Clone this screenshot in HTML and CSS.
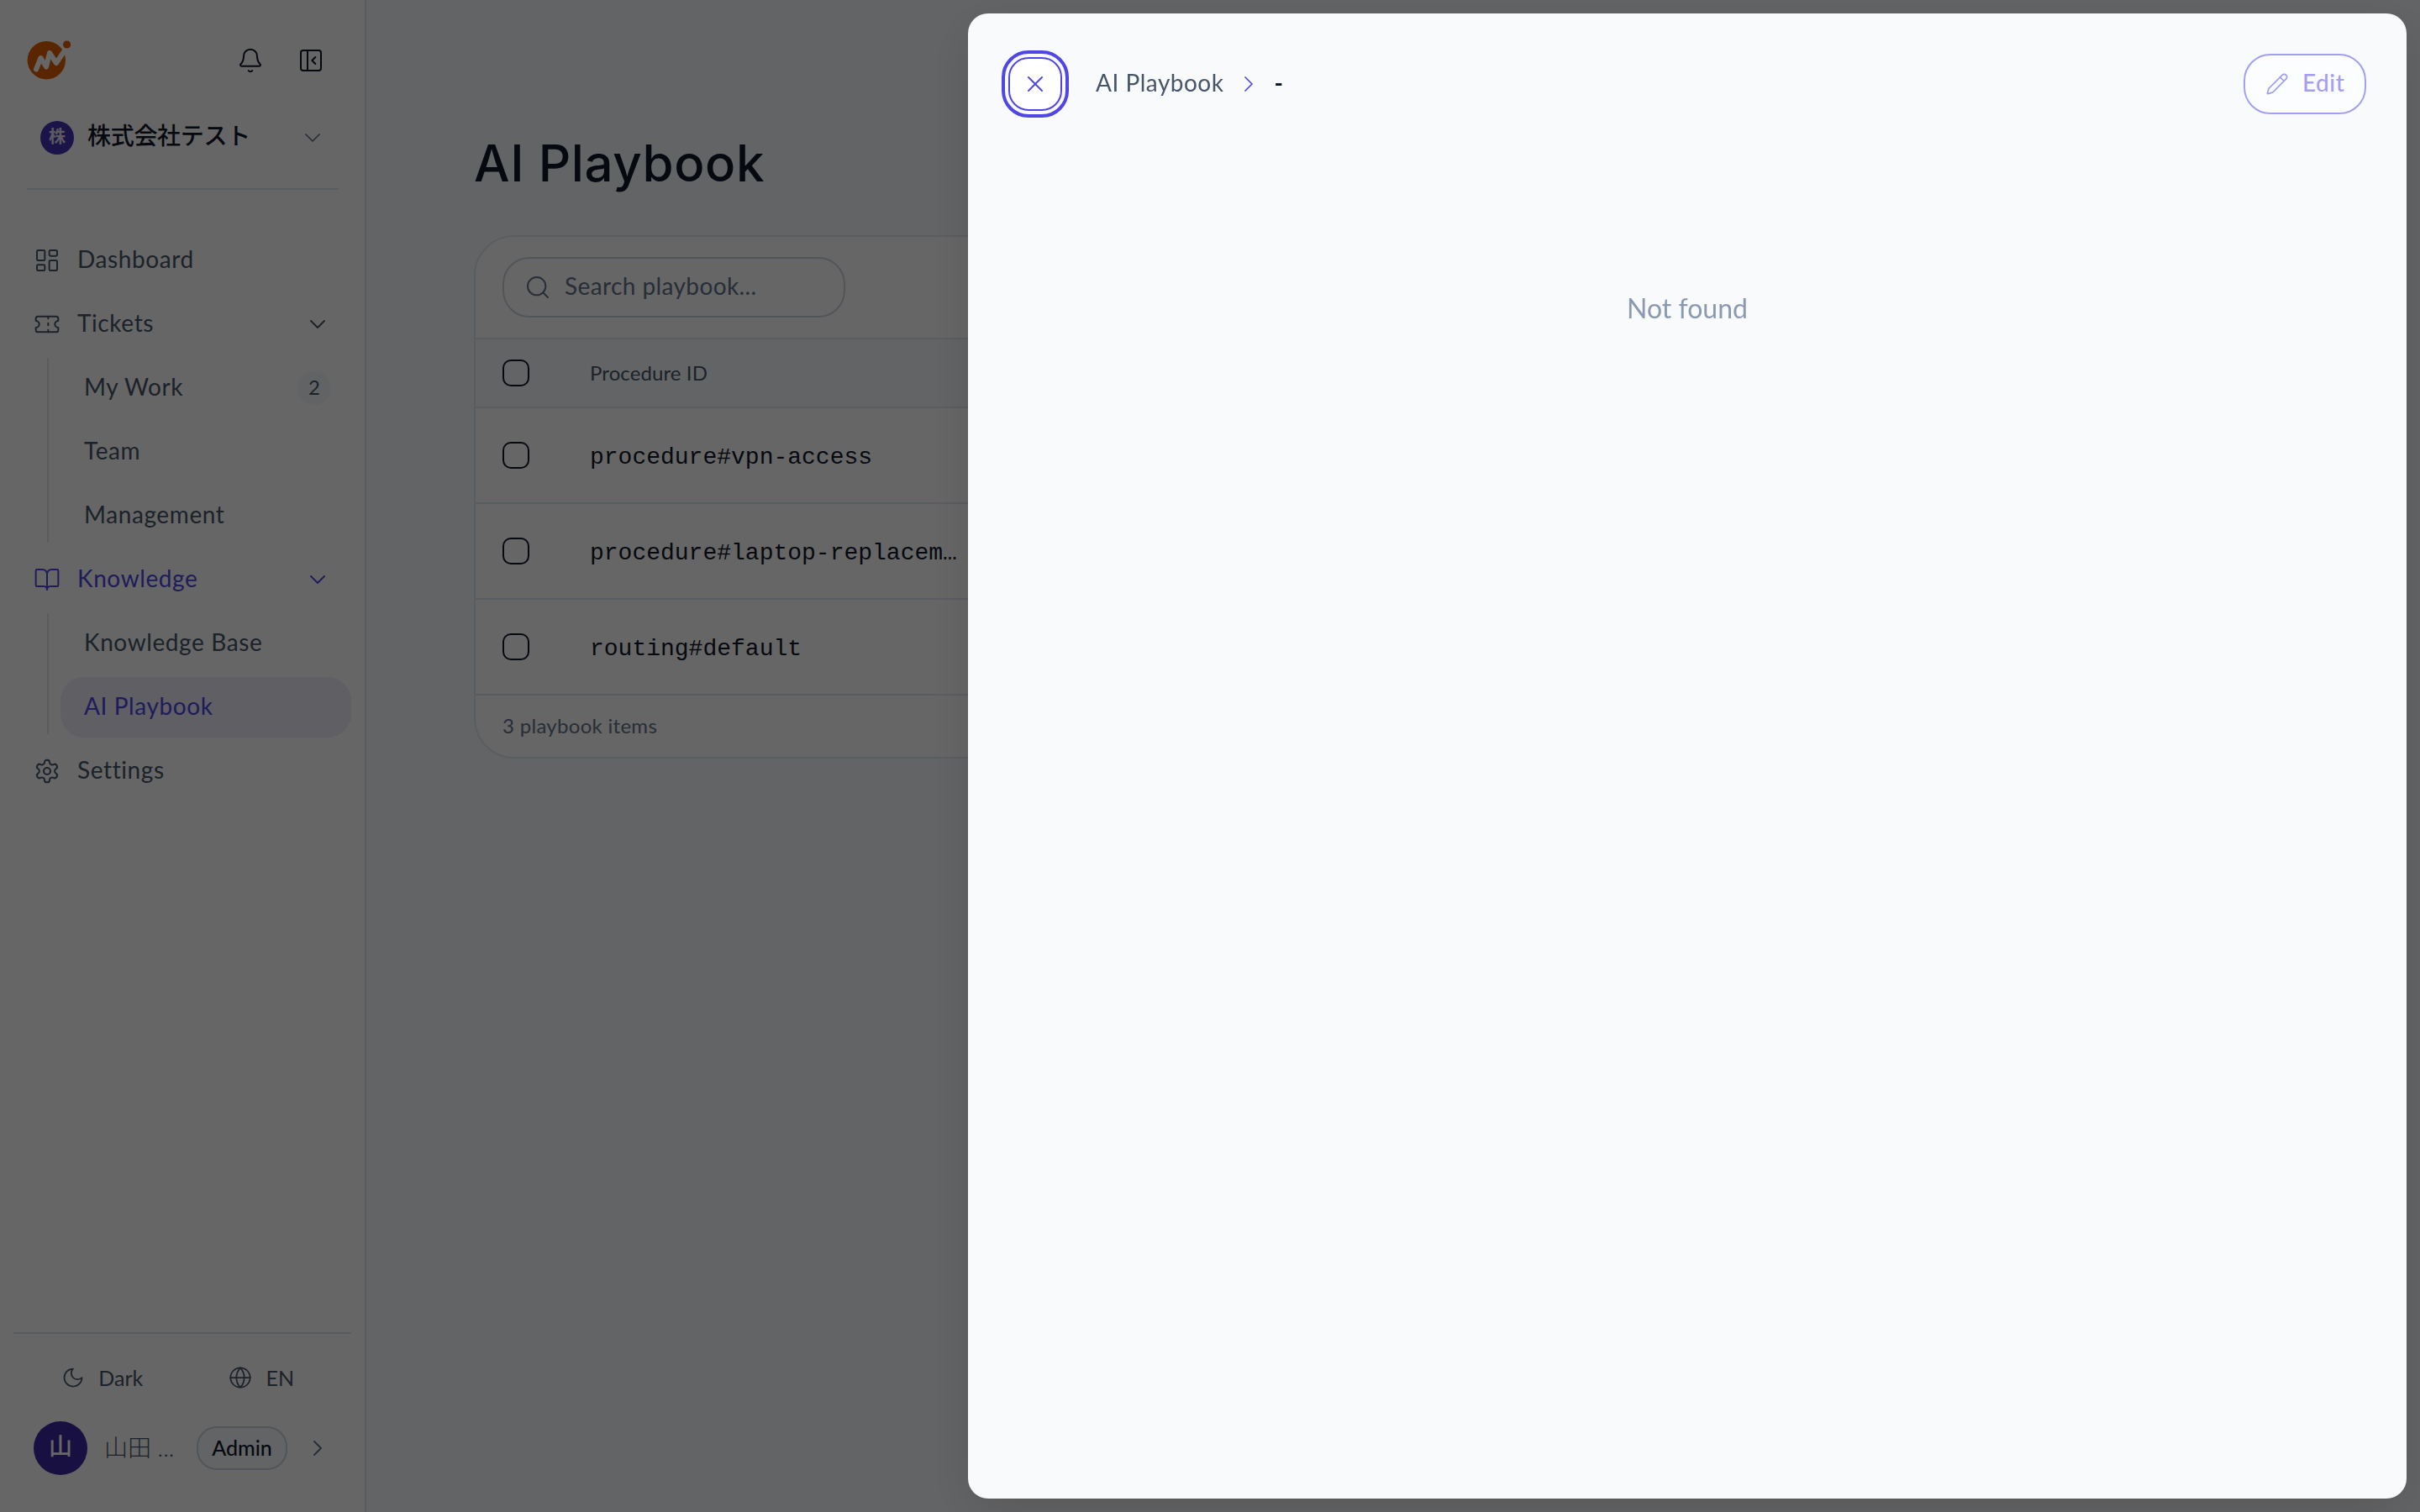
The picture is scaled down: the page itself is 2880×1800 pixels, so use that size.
FILE: index.html
```html
<!DOCTYPE html>
<html lang="en">
<head>
    <meta charset="UTF-8">
    <meta name="viewport" content="width=device-width, initial-scale=1.0">
    <title>AI Playbook</title>
    <link rel="stylesheet" href="styles.css">
</head>
<body>
    <div class="app">
        <!-- Sidebar -->
        <aside class="sidebar">
            <div class="sidebar-top">
                <svg class="logo" viewBox="0 0 52 48">
                    <circle cx="23.300" cy="23.700" r="22.700" fill="#e06000"/>
                    <circle cx="47.600" cy="5" r="4.600" fill="#e06000"/>
                    <path d="M11 34.500 L16.500 21 L23 31.500 L27 15 L35 27 L44 13.500" fill="none" stroke="#fff" stroke-width="6" stroke-linecap="round" stroke-linejoin="round"/>
                </svg>
                <div class="top-actions">
                    <svg class="icon" viewBox="0 0 24 24"><path d="M10.268 21a2 2 0 0 0 3.464 0"/><path d="M3.262 15.326A1 1 0 0 0 4 17h16a1 1 0 0 0 .74-1.673C19.41 13.956 18 12.499 18 8A6 6 0 0 0 6 8c0 4.499-1.411 5.956-2.738 7.326"/></svg>
                    <svg class="icon" viewBox="0 0 24 24"><rect x="3" y="3" width="18" height="18" rx="2"/><path d="M9 3v18"/><path d="m16 15-3-3 3-3"/></svg>
                </div>
            </div>
            <div class="org">
                <span class="org-avatar">株</span>
                <span class="org-name">株式会社テスト</span>
                <svg class="icon org-chevron" viewBox="0 0 24 24"><path d="m6 9 6 6 6-6"/></svg>
            </div>

            <nav class="nav">
                <a class="nav-item">
                    <svg class="icon" viewBox="0 0 24 24"><rect x="3" y="3" width="7" height="9" rx="1"/><rect x="14" y="3" width="7" height="5" rx="1"/><rect x="14" y="12" width="7" height="9" rx="1"/><rect x="3" y="16" width="7" height="5" rx="1"/></svg>
                    <span class="label">Dashboard</span>
                </a>
                <a class="nav-item">
                    <svg class="icon" viewBox="0 0 24 24"><path d="M2 9a3 3 0 0 1 0 6v2a2 2 0 0 0 2 2h16a2 2 0 0 0 2-2v-2a3 3 0 0 1 0-6V7a2 2 0 0 0-2-2H4a2 2 0 0 0-2 2Z"/><path d="M13 5v2"/><path d="M13 17v2"/><path d="M13 11v2"/></svg>
                    <span class="label">Tickets</span>
                    <svg class="icon chevron" viewBox="0 0 24 24"><path d="m6 9 6 6 6-6"/></svg>
                </a>
                <div class="subnav">
                    <a class="nav-item"><span class="label">My Work</span><span class="count">2</span></a>
                    <a class="nav-item"><span class="label">Team</span></a>
                    <a class="nav-item"><span class="label">Management</span></a>
                </div>
                <a class="nav-item current">
                    <svg class="icon" viewBox="0 0 24 24"><path d="M12 7v14"/><path d="M3 18a1 1 0 0 1-1-1V4a1 1 0 0 1 1-1h5a4 4 0 0 1 4 4 4 4 0 0 1 4-4h5a1 1 0 0 1 1 1v13a1 1 0 0 1-1 1h-6a3 3 0 0 0-3 3 3 3 0 0 0-3-3z"/></svg>
                    <span class="label">Knowledge</span>
                    <svg class="icon chevron" viewBox="0 0 24 24"><path d="m6 9 6 6 6-6"/></svg>
                </a>
                <div class="subnav">
                    <a class="nav-item"><span class="label">Knowledge Base</span></a>
                    <a class="nav-item current active"><span class="label">AI Playbook</span></a>
                </div>
                <a class="nav-item">
                    <svg class="icon" viewBox="0 0 24 24"><path d="M12.220 2h-.44a2 2 0 0 0-2 2v.18a2 2 0 0 1-1 1.730l-.43.25a2 2 0 0 1-2 0l-.15-.08a2 2 0 0 0-2.730.730l-.22.38a2 2 0 0 0 .73 2.730l.15.100a2 2 0 0 1 1 1.720v.51a2 2 0 0 1-1 1.740l-.15.090a2 2 0 0 0-.73 2.730l.22.380a2 2 0 0 0 2.730.730l.15-.08a2 2 0 0 1 2 0l.43.250a2 2 0 0 1 1 1.730V20a2 2 0 0 0 2 2h.44a2 2 0 0 0 2-2v-.18a2 2 0 0 1 1-1.730l.43-.25a2 2 0 0 1 2 0l.15.080a2 2 0 0 0 2.730-.73l.22-.39a2 2 0 0 0-.73-2.730l-.15-.08a2 2 0 0 1-1-1.740v-.5a2 2 0 0 1 1-1.740l.15-.09a2 2 0 0 0 .73-2.730l-.22-.38a2 2 0 0 0-2.730-.73l-.15.080a2 2 0 0 1-2 0l-.43-.25a2 2 0 0 1-1-1.730V4a2 2 0 0 0-2-2z"/><circle cx="12" cy="12" r="3"/></svg>
                    <span class="label">Settings</span>
                </a>
            </nav>

            <div class="sidebar-bottom">
                <div class="prefs">
                    <span class="pref"><svg class="icon" viewBox="0 0 24 24"><path d="M12 3a6 6 0 0 0 9 9 9 9 0 1 1-9-9Z"/></svg>Dark</span>
                    <span class="pref"><svg class="icon" viewBox="0 0 24 24"><circle cx="12" cy="12" r="10"/><path d="M12 2a14.500 14.500 0 0 0 0 20 14.500 14.500 0 0 0 0-20"/><path d="M2 12h20"/></svg>EN</span>
                </div>
                <div class="user">
                    <span class="user-avatar">山</span>
                    <span class="user-name">山田 ...</span>
                    <span class="role">Admin</span>
                    <svg class="icon user-chevron" viewBox="0 0 24 24"><path d="m9 18 6-6-6-6"/></svg>
                </div>
            </div>
        </aside>

        <!-- Playbook list -->
        <main class="main">
            <h1>AI Playbook</h1>
            <section class="card">
                <div class="toolbar">
                    <div class="search">
                        <svg class="icon" viewBox="0 0 24 24"><circle cx="11" cy="11" r="8"/><path d="m21 21-4.300-4.300"/></svg>
                        <span class="label">Search playbook...</span>
                    </div>
                </div>
                <div class="row head"><span class="checkbox"></span><span class="col-id">Procedure ID</span></div>
                <div class="row"><span class="checkbox"></span><span class="mono">procedure#vpn-access</span></div>
                <div class="row"><span class="checkbox"></span><span class="mono">procedure#laptop-replacem…</span></div>
                <div class="row"><span class="checkbox"></span><span class="mono">routing#default</span></div>
                <div class="card-footer">3 playbook items</div>
            </section>
        </main>
    </div>

    <div class="overlay"></div>

    <!-- Detail drawer -->
    <div class="drawer">
        <header class="drawer-header">
            <button class="close-btn"><svg class="icon" viewBox="0 0 24 24"><path d="M18 6 6 18"/><path d="m6 6 12 12"/></svg></button>
            <div class="breadcrumb">
                <span class="label">AI Playbook</span>
                <svg class="icon" viewBox="0 0 24 24"><path d="m9 18 6-6-6-6"/></svg>
                <strong class="label">-</strong>
            </div>
            <button class="edit-btn" disabled>
                <svg class="icon" viewBox="0 0 24 24"><path d="M21.174 6.812a1 1 0 0 0-3.986-3.987L3.842 16.174a2 2 0 0 0-.5.830l-1.321 4.352a.5.500 0 0 0 .623.622l4.353-1.320a2 2 0 0 0 .83-.497z"/><path d="m15 5 4 4"/></svg>
                <span class="label">Edit</span>
            </button>
        </header>
        <p class="empty">Not found</p>
    </div>
</body>
</html>
```
FILE: styles.css
```css
* {
    box-sizing: border-box;
}

body {
    margin: 0;
    font-family: Lato, "Noto Sans CJK JP", sans-serif;
    font-size: 28px;
    line-height: 40px;
    color: #0f172a;
    background-color: #f8fafc;
    overflow: hidden;
}

.icon {
    width: 32px;
    height: 32px;
    flex: none;
    fill: none;
    stroke: currentColor;
    stroke-width: 1.5;
    stroke-linecap: round;
    stroke-linejoin: round;
}

/* Optical centering next to icons */
.label {
    padding-bottom: 4px;
    letter-spacing: 0.5px;
}

.app {
    display: flex;
    height: 1800px;
}

/* Sidebar */
.sidebar {
    width: 436px;
    flex: none;
    display: flex;
    flex-direction: column;
    background-color: #fff;
    border-right: 2px solid #e2e8f0;
}

.sidebar-top {
    display: flex;
    justify-content: space-between;
    align-items: center;
    height: 48px;
    margin: 48px 48px 0 32px;
}

.logo {
    width: 52px;
    height: 48px;
}

.top-actions {
    display: flex;
    gap: 40px;
}

.org {
    display: flex;
    align-items: center;
    height: 130px;
    margin: 0 31px 0 32px;
    padding: 8px 15px 0 16px;
    border-bottom: 2px solid #e2e8f0;
}

.org-avatar {
    width: 40px;
    height: 40px;
    border-radius: 50%;
    background-color: #4434b4;
    color: #e4e2f0;
    font-size: 20px;
    font-weight: 700;
    line-height: 37px;
    text-align: center;
}

.org-name {
    margin: -6px auto 0 16px;
    font-weight: 500;
    letter-spacing: -0.3px;
}

.org-chevron {
    color: #64748b;
    stroke-width: 1.3;
}

.nav {
    display: flex;
    flex-direction: column;
    gap: 4px;
    margin: 48px 16px 0;
    color: #475569;
}

.nav-item {
    display: flex;
    align-items: center;
    gap: 20px;
    height: 72px;
    padding: 0 24px;
    border-radius: 28px;
}

.nav-item .label {
    letter-spacing: 0.6px;
}

.nav-item .chevron {
    margin-left: auto;
}

.subnav {
    display: flex;
    flex-direction: column;
    gap: 4px;
    margin: 0 0 4px 40px;
    padding-left: 14px;
    border-left: 2px solid #e2e8f0;
}

.subnav .nav-item {
    padding: 0 24px 0 28px;
}

.subnav .nav-item:last-child {
    margin-bottom: -4px;
}

.count {
    width: 40px;
    height: 40px;
    margin-left: auto;
    border-radius: 50%;
    background-color: #f5f8fb;
    font-size: 24px;
    line-height: 38px;
    text-align: center;
}

.nav-item.current {
    color: #4f46e5;
}

.nav-item.active {
    background-color: #ededf9;
}

.sidebar-bottom {
    margin: auto 16px 44px;
    border-top: 2px solid #e2e8f0;
    color: #475569;
}

.prefs {
    display: flex;
    height: 104px;
    align-items: center;
    padding: 0 6px 0 5px;
    font-size: 25px;
}

.pref {
    display: flex;
    flex: 1;
    justify-content: center;
    align-items: center;
    gap: 16px;
}

.pref:last-child {
    margin-left: -12px;
}

.pref .icon {
    width: 28px;
    height: 28px;
}

.user {
    display: flex;
    align-items: center;
    height: 64px;
    padding: 0 24px;
}

.user-avatar {
    width: 64px;
    height: 64px;
    border-radius: 50%;
    background-color: #3c2aa4;
    color: #fff;
    font-weight: 500;
    line-height: 58px;
    text-align: center;
}

.user-name {
    margin-left: 20px;
    width: 110px;
    padding-bottom: 2px;
    font-weight: 300;
}

.role {
    width: 108px;
    height: 52px;
    border: 2px solid #cbd5e1;
    border-radius: 24px;
    background-color: #f8fafc;
    color: #0f172a;
    font-size: 25px;
    font-weight: 500;
    line-height: 46px;
    text-align: center;
}

.user-chevron {
    margin-left: 20px;
    color: #64748b;
}

/* List */
.main {
    flex: 1;
    padding: 154px 128px 0;
}

h1 {
    margin: 0 0 46px;
    font-family: Inter, sans-serif;
    font-size: 60px;
    font-weight: 500;
    line-height: 80px;
    letter-spacing: 0.6px;
}

.card {
    border: 2px solid #e2e8f0;
    border-radius: 48px;
    background-color: #fff;
    overflow: hidden;
}

.toolbar {
    height: 122px;
    padding: 24px 32px;
    border-bottom: 2px solid #e2e8f0;
}

.search {
    display: flex;
    align-items: center;
    gap: 16px;
    width: 408px;
    height: 72px;
    padding: 0 24px;
    border: 2px solid #cbd5e1;
    border-radius: 32px;
    color: #64748b;
}

.search .label {
    letter-spacing: 0.4px;
}

.row {
    display: flex;
    align-items: center;
    gap: 72px;
    height: 114px;
    padding: 0 32px;
    border-bottom: 2px solid #e2e8f0;
}

.row.head {
    height: 82px;
    background-color: #f8fafc;
    color: #475569;
    font-size: 24px;
}

.col-id {
    padding-bottom: 1px;
    letter-spacing: 0.1px;
}

.checkbox {
    width: 32px;
    height: 32px;
    border: 2px solid #0f172a;
    border-radius: 10px;
}

.mono {
    padding-top: 5px;
    font-family: "Liberation Mono", monospace;
    white-space: nowrap;
}

.card-footer {
    height: 73px;
    padding: 0 32px;
    color: #64748b;
    font-size: 24px;
    letter-spacing: 0.3px;
    line-height: 71px;
}

.overlay {
    position: fixed;
    inset: 0;
    background-color: rgba(0, 0, 0, 0.6);
}

/* Drawer */
.drawer {
    position: fixed;
    top: 16px;
    right: 16px;
    bottom: 16px;
    width: 1712px;
    border-radius: 24px;
    background-color: #f9fafc;
    box-shadow: 0 16px 60px rgba(0, 0, 0, 0.12);
}

.drawer-header {
    display: flex;
    align-items: center;
    height: 168px;
    padding: 0 48px;
}

.close-btn {
    display: flex;
    align-items: center;
    justify-content: center;
    width: 64px;
    height: 64px;
    padding: 0;
    border: 2px solid #4f46e5;
    border-radius: 24px;
    outline: 4px solid #4f46e5;
    outline-offset: 4px;
    background-color: #fff;
    color: #4f46e5;
}

.breadcrumb {
    display: flex;
    align-items: center;
    gap: 14px;
    margin: 0 auto 0 40px;
    color: #475569;
}

.breadcrumb .icon {
    color: #4f46e5;
    stroke-width: 1.3;
}

.breadcrumb strong {
    color: #0f172a;
}

.edit-btn {
    display: flex;
    align-items: center;
    gap: 16px;
    width: 146px;
    height: 72px;
    padding: 0 24px;
    border: 2px solid #4f46e5;
    border-radius: 32px;
    background-color: #fff;
    color: #4f46e5;
    font: 500 28px/40px Lato, sans-serif;
    opacity: 0.5;
}

.edit-btn .icon {
    width: 28px;
    height: 28px;
}

.empty {
    margin: 159px 0 0;
    color: #8c9ab0;
    font-size: 32px;
    line-height: 48px;
    text-align: center;
}
```
